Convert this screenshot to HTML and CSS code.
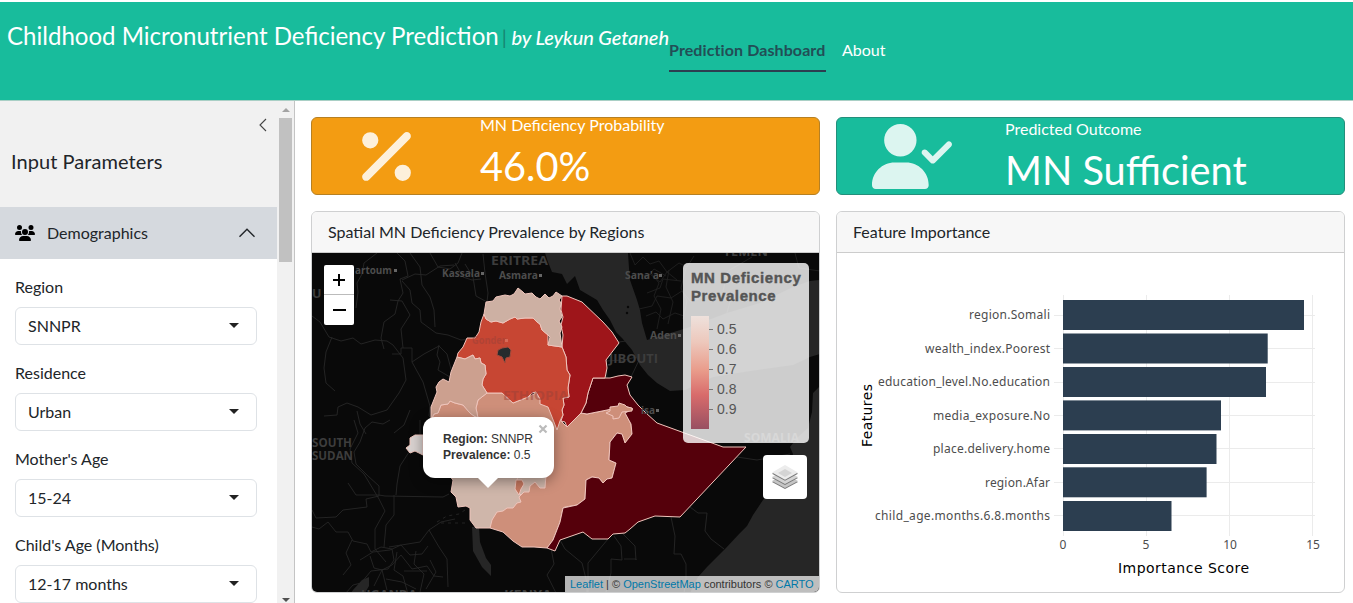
FILE: index.html
```html
<!DOCTYPE html>
<html lang="en">
<head>
<meta charset="utf-8">
<title>Childhood Micronutrient Deficiency Prediction</title>
<link rel="stylesheet" href="styles.css">
</head>
<body>
<header class="navbar">
  <h1 class="brand"><span class="brand-name">Childhood Micronutrient Deficiency Prediction</span><span class="divider">|</span><em>by Leykun Getaneh</em></h1>
  <nav class="tabs"><a class="tab active">Prediction Dashboard</a><a class="tab">About</a></nav>
</header>
<div class="layout">
  <aside class="sidebar">
    <div class="side-content">
      <div class="side-head">
        <svg class="collapse" width="16" height="16" viewBox="0 0 16 16"><path d="M11 2 5 8l6 6"/></svg>
        <h2>Input Parameters</h2>
      </div>
      <div class="accordion">
        <svg class="users" width="20" height="16" viewBox="0 0 640 512"><path d="M144 0a80 80 0 1 1 0 160A80 80 0 1 1 144 0zM512 0a80 80 0 1 1 0 160A80 80 0 1 1 512 0zM0 298.700C0 239.800 47.800 192 106.700 192h42.700c15.900 0 31 3.500 44.600 9.700-1.300 7.200-1.900 14.700-1.900 22.300 0 38.200 16.800 72.500 43.300 96H21.300C9.600 320 0 310.400 0 298.700zM405.300 320h-.7c26.600-23.500 43.300-57.800 43.300-96 0-7.600-.7-15-1.900-22.300 13.600-6.300 28.700-9.700 44.600-9.700h42.700C592.200 192 640 239.800 640 298.700c0 11.800-9.600 21.300-21.300 21.300H405.300zM224 224a96 96 0 1 1 192 0 96 96 0 1 1-192 0zM128 485.300C128 411.700 187.700 352 261.300 352h117.300C452.300 352 512 411.700 512 485.300c0 14.700-11.900 26.700-26.700 26.700H154.700C140 512 128 500.100 128 485.300z"/></svg>
        <span>Demographics</span>
        <svg class="chevron" width="20" height="20" viewBox="0 0 16 16"><path d="M2 11l6-6 6 6"/></svg>
      </div>
      <div class="fields">
        <div class="field"><label>Region</label><div class="select"><span>SNNPR</span><i></i></div></div>
        <div class="field"><label>Residence</label><div class="select"><span>Urban</span><i></i></div></div>
        <div class="field"><label>Mother's Age</label><div class="select"><span>15-24</span><i></i></div></div>
        <div class="field"><label>Child's Age (Months)</label><div class="select"><span>12-17 months</span><i></i></div></div>
      </div>
    </div>
    <div class="scrollbar"><i class="up"></i><div class="thumb"></div><i class="down"></i></div>
  </aside>
  <main class="main">
    <section class="box warning">
      <div class="showcase"><svg width="49" height="65" viewBox="0 0 384 512"><path d="M374.600 118.600c12.500-12.500 12.500-32.800 0-45.300s-32.800-12.500-45.300 0l-320 320c-12.500 12.500-12.500 32.800 0 45.300s32.800 12.500 45.300 0l320-320zM128 128a64 64 0 1 0-128 0 64 64 0 1 0 128 0zM384 384a64 64 0 1 0-128 0 64 64 0 1 0 128 0z"/></svg></div>
      <div class="value"><p>MN Deficiency Probability</p><strong>46.0%</strong></div>
    </section>
    <section class="box success">
      <div class="showcase"><svg width="81" height="65" viewBox="0 0 640 512"><path d="M96 128a128 128 0 1 1 256 0A128 128 0 1 1 96 128zM0 482.300C0 383.800 79.800 304 178.300 304h91.400C368.200 304 448 383.800 448 482.300c0 16.400-13.300 29.700-29.700 29.700H29.700C13.300 512 0 498.700 0 482.300zM625 177L497 305c-9.400 9.400-24.600 9.400-33.900 0l-64-64c-9.400-9.400-9.400-24.600 0-33.900s24.600-9.400 33.900 0l47 47L591 143c9.400-9.400 24.600-9.400 33.900 0s9.400 24.600 0 33.900z"/></svg></div>
      <div class="value roomy"><p>Predicted Outcome</p><strong>MN Sufficient</strong></div>
    </section>
    <section class="card">
      <h3>Spatial MN Deficiency Prevalence by Regions</h3>
      <div class="map">
        <svg class="basemap" width="508" height="340" viewBox="312 253 508 340">
          <rect x="312" y="253" width="508" height="340" fill="#090909"/>
          <g fill="#262626">
            <path d="M545 253L548 262L552 272L562 274L567 284L575 276L580 290L597 300L603 310L610 320L616 332L622 338L632 350L640 365L648 375L657 383L670 391L685 390L713 377L750 371L793 365L810 357L820 354L820 280L810 281L793 287L760 303L727 313L687 328L647 340L642 323L640 310L637 300L630 280L629 268L628 253Z"/>
            <path d="M820 386L813 393L812 412L808 428L797 438L790 447L793 454L788 470L763 500L753 515L747 526L740 533L725 549L707 567L698 577L690 593H820Z"/>
            <path d="M472 527l7 0 1 15 6 16 5 7v11l-9-9-9-16zM353 590l9-10 7-3v9l-4 7h-14z"/>
          </g>
          <g fill="#090909"><circle cx="628" cy="307" r="1.200"/><circle cx="627" cy="313" r="1.200"/></g>
          <g class="borders">
            <path d="M312 316l8 6 9 15 12 4 12-3 8 6 14-4 12 1 6 4 10 13 3 22-7 13-12 17-16 5-13-8-11-4-9 4-1 8-13 1"/>
            <path d="M332 337l-6 15-2 16 2 15 9 8M377 253l-13 10-2 11-5 9 1 9-2 16M397 253l8 8 3 15-8 3 3 14-5 8-3 13-11 8-3 16 3 11"/>
            <path d="M402 280l13-6 11 1 14-9 14-1M410 253l10 14 2 18 8 12 4 13 1 17M430 253l8 14 12 2 8-6 4-10M402 281l8 9 2 13 8 7 1 12 15 11 12 2 13 5 12-1M392 354h9v-6h11v14l11 20 7 24-1 10 8 7M412 362l12-8 15-8 8 8 4 15M483 254l2 19 3 20-1 9-11-6-3-19-8-13M455 263l8 14 9 3 9-1M390 300l12 1 8 14-9 14 2 19M439 345l-2 10 3 7-2 8 12 7"/>
            <path d="M390 420l-7 4-11-2-7 6-5 14-6 10 2 12 12 12 11 10v10l-13 3 1 8-24 3-7 7-20 1-4-8M348 483l8 12h23l6 1 58 1 6-3M354 420l4 13-8 16 2 14 12 11 15 25 6 12-10 18 0 20 11 13M394 495v20l-8 10-2 22M366 434l-6-10-3-13M410 410l-6 15-10 8M420 420v15l-20 31-3 18-1 11"/>
            <path d="M312 527l7 2 9-7 8 10 12 0 5 9 14 3 4 8 10-5 11 2 2 11-6 9-17 2-10 12-8 2-8 9M389 547l31-5 9-12 12-8 14-3M429 530l10 17 8 12 1 28M343 575l8-10-5-12 6-13M360 560l13-8 17-2 11-5 9 10 12-1 6-8M374 586l8-16 10-5 9-10 11 14 15-3 7 10 9 1M370 556l4 12 8 2 5 20M397 552l-3 18 9 6 5 18M416 551l-2 13 10 10-4 18M430 560l6 12-10 17M404 571h23M386 579l16 3 14 7"/>
            <path d="M437 522l10-6 12-2 9-6" stroke-dasharray="3 4"/><path d="M441 523h27" stroke-dasharray="3 4"/><path d="M551 548l3 16-7 11 9 18M560 540l5 9 17 14 5 20v10M614 536l7 10 1 14-11-1v14l-5 19M608 539l-20 24v30M622 533l13 13 1 14v-1h-12M671 517l4 19-1 18h7l5 10v14l-2 15M690 507l8 6h9l-2 18 6 8 13 10M619 342l-13 18 1 18M619 342l7-1 8-3M606 361l18-1 17-4-10 21M737 457l20 3 33-6"/>
          </g>
          <g class="yemen"><path d="M630 253l5 12 8-8 7 7 9-3 8 11 12-9 8 4 7-11M642 280l8-6 10 8 7-10 10 8M647 293l13-5 3-9 18 2M639 309l13-3 5-10 14 2 11-7 9 11 12-5M646 316l10-4 7 7 12-6 9 3M651 273l8 10-5 13 7 13-4 20M669 270l-3 17 7 15-5 22M686 268l-5 20 6 13-4 18M633 273l15 3 6-7 12 7M727 313l4-15-8-7 5-20 24-14M795 253l4 15 21 3"/></g>
          <g class="place"><text x="355" y="274" textLength="37" lengthAdjust="spacingAndGlyphs">artoum</text><text x="442" y="277" textLength="38" lengthAdjust="spacingAndGlyphs">Kassala</text><text x="499" y="279" textLength="39" lengthAdjust="spacingAndGlyphs">Asmara</text><text x="625" y="279" textLength="34" lengthAdjust="spacingAndGlyphs">Sana'a</text><text x="650" y="339" textLength="27" lengthAdjust="spacingAndGlyphs">Aden</text></g>
          <g class="country"><text x="491" y="265" textLength="57" lengthAdjust="spacingAndGlyphs">ERITREA</text><text x="723" y="256" textLength="45" lengthAdjust="spacingAndGlyphs">YEMEN</text><text x="609" y="363" textLength="49" lengthAdjust="spacingAndGlyphs">JIBOUTI</text><text x="312" y="298">U</text><text x="312" y="447" textLength="40" lengthAdjust="spacingAndGlyphs">SOUTH</text><text x="312" y="460" textLength="41" lengthAdjust="spacingAndGlyphs">SUDAN</text><text x="361" y="599" textLength="56" lengthAdjust="spacingAndGlyphs">UGANDA</text><text x="504" y="599" textLength="48" lengthAdjust="spacingAndGlyphs">KENYA</text></g>
          <g fill="#666"><path d="M394 269h3v3h-3zM481 272h3v3h-3zM539 274h3v3h-3zM659 274h3v3h-3zM678 334h3v3h-3z"/></g>
          <g class="regions">
            <path fill="#ce8f7a" d="M431 420L434 414L438 413L441 405L448 404L450 401L455 403L463 405L470 413L474 416L478 418L476 408L478 400L487 393L502 393L513 403L528 397L540 391L560 420L567 427L581 413L587 414L607 410L625 406L633 409L625 413L631 424L632 434L625 443L622 434L617 433L610 442L609 460L616 463L612 478L607 479L603 483L599 478L592 477L586 480L585 499L577 505L565 507L563 508L560 522L553 540L547 548L534 547L522 547L513 541L503 532L490 528L470 500L445 470Z"/>
            <path fill="#55000b" d="M593 378L610 378L618 376L625 375L632 377L627 385L630 395L638 405L646 413L657 423L690 435L723 447L746 447L680 517L655 516L638 522L630 529L625 533L613 534L608 539L592 539L583 532L560 540L555 551L547 548L553 540L560 522L563 508L577 505L585 499L586 480L592 477L599 478L603 483L607 479L612 478L616 463L609 460L610 442L617 433L622 434L625 443L632 434L631 424L625 413L633 409L625 406L607 410L587 414L581 413L586 403L588 393Z"/>
            <path fill="#ce8f7a" d="M606 413l4-2 0-4 8-1 1-3 6 2 2 2 5 1v3l-10 1-3 6-6 1v-3z"/>
            <path fill="#9e151a" d="M562 296L567 296L582 302L603 322L612 332L619 343L606 360L607 368L605 378H593L588 393L586 403L581 413L574 420L567 427L565 422L561 421L563 415L562 410L564 405L563 398L569 397L568 388L570 375L567 370L566 357L562 347L563 335L561 325L563 317L561 310Z"/>
            <path fill="#c74633" d="M484 314L486 319L491 322L496 321L503 323L510 319L515 317L517 319L525 318L533 318L537 322L540 324L542 330L548 335V345L562 347L566 357L567 370L570 375L568 388L569 397L563 398L564 405L562 410L563 415L560 421L557 430L552 417L548 407L540 404L540 399L536 392L532 393L528 397L513 403L502 393L487 393L482 385L483 379L486 374L485 365L481 363L480 358L475 359L473 355L465 359L457 357L458 353L463 347L467 338L475 338L479 332L481 322Z"/>
            <path fill="#cca08f" d="M457 357L453 367L451 372L449 382L443 379L439 382L436 387L437 392L435 397L431 407V420L434 414L438 413L441 405L448 404L450 401L455 403L463 405L470 413L474 416L478 418L476 408L478 400L487 393L482 385L483 379L486 374L485 365L481 363L480 358L475 359L473 355L465 359Z"/>
            <path fill="#cdb0a3" d="M486 302L493 301L496 297L505 295L510 296L514 294L518 288L523 292L525 294L532 293L536 297L540 299L545 294L549 298L553 296L556 292L562 296L559 300L561 303L560 309L562 317L559 321L562 327L560 333L562 347L548 345L550 337L548 335L542 330L540 324L537 322L533 318L525 318L517 319L515 317L510 319L503 323L496 321L491 322L486 319L484 314Z"/>
            <path fill="#d9d2d0" d="M406 448l4-3v-7l5-3h8v20l-8-4-5 2z"/>
            <path fill="#cfb6aa" d="M449 475L453 480L451 492L456 497L458 507L466 506L470 508V520L476 528H490L492 520L497 512L503 511L507 508L513 508L517 503L521 502L519 497L521 495L516 490L518 475Z"/>
            <path fill="#cfb6aa" d="M518 475H546L545 488L540 488L535 482L530 486L529 492L524 492L521 495L516 490Z"/>
            <path fill="#c5775f" d="M516 480l6 0 2 4-3 5-2 6-4-6z"/>
            <path d="M498 350l4-2 6-1 3 3-1 7-4 1-1 5-3-6-5-2z" fill="#272b2d" stroke="#a34b3c"/>
          </g>
          <g class="on-region"><text x="472" y="344" textLength="34" lengthAdjust="spacingAndGlyphs">Gonder</text><text x="503" y="400" textLength="65" lengthAdjust="spacingAndGlyphs" class="large">ETHIOPIA</text></g>
          <g class="place"><text x="641" y="414" textLength="14" lengthAdjust="spacingAndGlyphs">isa</text></g>
          <path d="M505 339h3v3h-3z" fill="#d66a58"/><path d="M656 409h3v3h-3z" fill="#666"/>
          <g class="country"><text x="744" y="442" textLength="55" lengthAdjust="spacingAndGlyphs">SOMALIA</text></g>
        </svg>
        <div class="zoom"><span><svg width="30" height="30"><path d="M9 15h12M15 9v12"/></svg></span><span><svg width="30" height="30"><path d="M9 15h13"/></svg></span></div>
        <div class="popup"><svg class="close" width="10" height="10"><path d="M1.500 1.500l7 7m0-7l-7 7"/></svg><div><b>Region:</b> SNNPR</div><div><b>Prevalence:</b> 0.5</div><i class="tip"></i></div>
        <div class="legend">
          <h4>MN Deficiency<br>Prevalence</h4>
          <div class="scale"><div class="ramp"></div><ul><li>0.5</li><li>0.6</li><li>0.7</li><li>0.8</li><li>0.9</li></ul></div>
        </div>
        <div class="layers"><svg width="26" height="26" viewBox="0 0 26 26"><path d="M0 18l13-7 13 7-13 7z" fill="#777"/><path d="M0 17l13-7 13 7-13 7z" fill="#c5c5c5"/><path d="M0 14l13-7 13 7-13 7z" fill="#777"/><path d="M0 13l13-7 13 7-13 7z" fill="#d3d3d3"/><path d="M0 9.700l13-7 13 7-13 7z" fill="#777"/><path d="M0 8.500L13 1l13 7.500L13 15.800z" fill="#ececec"/><path d="M6 9l7-4 7 4-7 4z" fill="#d4d4d4"/></svg></div>
        <div class="credit"><a>Leaflet</a> | © <a>OpenStreetMap</a> contributors © <a>CARTO</a></div>
      </div>
    </section>
    <section class="card">
      <h3>Feature Importance</h3>
      <svg class="chart" width="507" height="339" viewBox="837 253 507 339">
        <path class="grid" d="M1054 315.500h261M1054 348.500h261M1054 382.500h261M1054 415.500h261M1054 448.500h261M1054 482.500h261M1054 515.500h261M1063.500 295v241M1146.500 295v241M1229.500 295v241M1312.500 295v241"/>
        <g fill="#2c3e50"><rect x="1063" y="300" width="241" height="30"/><rect x="1063" y="333.500" width="204.700" height="30"/><rect x="1063" y="367" width="203" height="30"/><rect x="1063" y="400.400" width="158" height="30"/><rect x="1063" y="434" width="153.500" height="30"/><rect x="1063" y="467.300" width="143.600" height="30"/><rect x="1063" y="501" width="108.500" height="30"/></g>
        <g class="ticks"><text x="969" y="319" textLength="81">region.Somali</text><text x="925" y="353" textLength="125">wealth_index.Poorest</text><text x="878" y="386" textLength="172">education_level.No.education</text><text x="933" y="420" textLength="117">media_exposure.No</text><text x="933" y="453" textLength="117">place.delivery.home</text><text x="985" y="487" textLength="65">region.Afar</text><text x="875" y="520" textLength="175">child_age.months.6.8.months</text>
        <g text-anchor="middle"><text x="1063" y="549">0</text><text x="1146" y="549">5</text><text x="1230" y="549">10</text><text x="1313" y="549">15</text></g></g>
        <g class="axis"><text x="1118" y="573" textLength="131">Importance Score</text><text transform="translate(872 447) rotate(-90)" textLength="63">Features</text></g>
      </svg>
    </section>
  </main>
</div>
</body>
</html>
```
FILE: styles.css
```css
* { box-sizing: border-box; }
body { margin: 0; height: 603px; overflow: hidden; font: 16px/24px Lato, sans-serif; color: #212529; background: #fff; display: flex; flex-direction: column; }
h1, h2, h3, h4, p, ul { margin: 0; padding: 0; font-weight: 400; }
.navbar { flex: none; height: 101px; border-top: 2px solid #fff; border-bottom: 1px solid #a9cfc5; background: #18bc9c; display: flex; align-items: flex-start; padding-left: 7px; color: #fff; }
.brand { width: 662px; font-size: 24px; line-height: 36px; padding-top: 16px; white-space: nowrap; display: flex; align-items: baseline; }
.brand-name { width: 491px; font-size: 24.05px; }
.divider { font-size: 20px; width: 15px; text-align: center; color: #168471; }
.brand em { font-size: 20px; font-weight: 500; letter-spacing: -.07px; margin-left: 1px; }
.tabs { display: flex; gap: 16px; padding-top: 36px; }
.tab { height: 34px; }
.tab.active { width: 157px; font-weight: 700; letter-spacing: .1px; color: #224e56; border-bottom: 2px solid #2c3e50; white-space: nowrap; }
.layout { display: flex; flex: 1; min-height: 0; }
.sidebar { width: 295px; flex: none; display: flex; border-right: 1px solid #c4c4c4; overflow: hidden; }
.side-content { width: 277px; }
.side-head { height: 106px; background: #f1f1f1; padding: 16px 6px 0 11px; display: flex; flex-direction: column; }
.collapse { align-self: flex-end; fill: none; stroke: #444; stroke-width: 1.1; }
.side-head h2 { font-size: 20px; line-height: 24px; margin-top: 16px; letter-spacing: .06px; }
.accordion { height: 52px; background: #d5d9de; display: flex; align-items: center; padding: 0 20px 0 15px; }
.accordion span { flex: 1; margin-left: 12px; }
.chevron { fill: none; stroke: #212529; stroke-width: 1.1; }
.fields { padding: 16px 20px 0 15px; display: flex; flex-direction: column; gap: 16px; }
.field { display: flex; flex-direction: column; gap: 8px; }
.field label { height: 24px; }
.select { height: 38px; border: 1px solid #dee2e6; border-radius: 6px; display: flex; align-items: center; justify-content: space-between; padding: 0 17px 0 12px; }
.select i { border: 5px solid transparent; border-top-color: #222; border-bottom: 0; margin-top: -2px; }
.scrollbar { width: 17px; background: #f1f1f1; display: flex; flex-direction: column; align-items: center; padding: 7px 0 1px; }
.up { border: 4px solid transparent; border-bottom-color: #a3a3a3; border-top: 0; }
.thumb { width: 13px; height: 144px; background: #c1c1c1; margin-top: 6px; }
.down { border: 4px solid transparent; border-top-color: #505050; border-bottom: 0; margin-top: auto; }
.main { flex: 1; display: grid; grid-template: 78px 382px / 509px 509px; gap: 16px; padding: 16px 8px 0 16px; }
.box { border: 1px solid #b68023; border-radius: 6px; display: flex; color: #fff; }
.warning { background: #f39c12; }
.success { background: #18bc9c; border-color: #238f7b; }
.showcase { width: 152px; display: flex; align-items: center; justify-content: center; padding-right: 1px; }
.warning .showcase { padding-right: 4px; }
.showcase svg { fill: #fff; opacity: .85; }
.value { margin-left: 16px; margin-top: -5px; white-space: nowrap; }
.roomy { margin-top: -1px; }
.value p { line-height: 24px; }
.value strong { display: block; font-size: 39.750px; line-height: 48px; font-weight: 400; margin-top: 5px; }
.card { border: 1px solid #cfd0d1; border-radius: 6px; overflow: hidden; display: flex; flex-direction: column; }
.card h3 { height: 41px; flex: none; padding: 8px 16px; font-size: 16px; background: #f7f7f7; border-bottom: 1px solid #ccc; }
.chart { display: block; }
.map { position: relative; flex: 1; overflow: hidden; font-family: "Liberation Sans", Arial, sans-serif; }
.basemap { display: block; }
.borders, .yemen { fill: none; stroke: #272727; stroke-width: .9; }
.yemen { stroke: #202020; }
.place { font: 700 11px "Open Sans", sans-serif; fill: #4d4d4d; }
.country { font: 700 12.500px "Open Sans", sans-serif; fill: #3d3d3d; }
.regions { stroke: #f0c5bc; stroke-width: 1; stroke-linejoin: round; }
.on-region { font: 700 11px "Open Sans", sans-serif; fill: #9b4238; opacity: .5; }
.on-region .large { font-size: 13px; }
.zoom { position: absolute; left: 12px; top: 12px; width: 30px; height: 60px; background: #fff; border-radius: 2px; display: flex; flex-direction: column; }
.zoom span { height: 30px; }
.zoom span:first-child { border-bottom: 1px solid #bbb; }
.zoom svg { display: block; fill: none; stroke: #000; stroke-width: 2; }
.popup { position: absolute; left: 111px; top: 164px; width: 131px; height: 61px; border-radius: 12px; background: #fff; color: #333; font-size: 12px; line-height: 16px; padding: 14px 0 0 20px; white-space: nowrap; box-shadow: 0 3px 14px rgba(0,0,0,.4); }
.popup .close { position: absolute; right: 6px; top: 7px; stroke: #bbb; stroke-width: 2.200; }
.tip { position: absolute; left: 54px; top: 60px; border: 11px solid transparent; border-top-color: #fff; border-bottom: 0; }
.legend { position: absolute; left: 371px; top: 10px; width: 126px; height: 180px; border-radius: 5px; background: rgba(255,255,255,.8); padding: 6px 8px; color: #555; }
.legend h4 { font-size: 15px; line-height: 18px; font-weight: 700; letter-spacing: .6px; white-space: nowrap; -webkit-text-stroke: .4px; }
.scale { display: flex; margin-top: 11px; }
.ramp { width: 18px; height: 113px; background: linear-gradient(#eee1dc, #edc8bc 23%, #e99c8b 48%, #d86b6b 70%, #985062); }
.scale ul { list-style: none; font-size: 14px; line-height: 20px; padding-top: 3px; }
.scale li { display: flex; align-items: center; gap: 4px; }
.scale li::before { content: ""; width: 4px; height: 1px; background: #777; }
.layers { position: absolute; left: 451px; top: 202px; width: 44px; height: 44px; border-radius: 4px; background: #fff; display: grid; place-items: center; }
.credit { position: absolute; right: 0; bottom: 0; height: 16px; width: 254px; padding-left: 5px; background: rgba(255,255,255,.7); font-size: 11px; line-height: 16px; color: #333; white-space: nowrap; }
.credit a { color: #0078a8; }
.grid { stroke: #ebebeb; stroke-width: 1; }
.ticks { font: 12px "Noto Sans", sans-serif; fill: #4d4d4d; }
.axis { font: 14px "DejaVu Sans", sans-serif; fill: #000; }
```
